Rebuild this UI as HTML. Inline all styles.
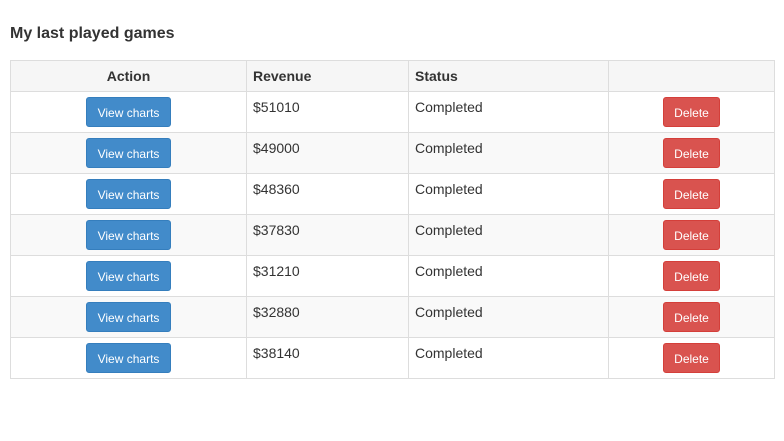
<!DOCTYPE html><html><head><style>
body{margin:0;background:#fff;font-family:"Liberation Sans",sans-serif;color:#333;width:784px;height:441px;overflow:hidden}
h3{position:absolute;left:10px;top:25px;margin:0;font-size:16px;font-weight:bold;color:#333}
table{position:absolute;left:10px;top:60px;border-collapse:collapse;width:765px;font-size:14px}
td,th{border:1px solid #ddd;padding:0 6px;vertical-align:top}
th{height:30px;text-align:left;vertical-align:middle;background:#f6f6f6}
td{height:41px;padding-top:7px;box-sizing:border-box}
tr:nth-child(odd) td{background:#f9f9f9}
.c{text-align:center}
td.c{padding-top:5px}
.b{display:inline-block;color:#fff;font-size:12px;height:30px;line-height:30px;border-radius:3px;box-sizing:border-box}
.v{background:#428bca;border:1px solid #357ebd;width:85px}
.d{background:#d9534f;border:1px solid #d43f3a;width:57px}
</style></head><body>
<h3>My last played games</h3>
<table>
<tr><th class="c" style="width:223px">Action</th><th style="width:149px">Revenue</th><th style="width:187px">Status</th><th></th></tr>
<tr><td class="c"><span class="b v">View charts</span></td><td>$51010</td><td>Completed</td><td class="c"><span class="b d">Delete</span></td></tr>
<tr><td class="c"><span class="b v">View charts</span></td><td>$49000</td><td>Completed</td><td class="c"><span class="b d">Delete</span></td></tr>
<tr><td class="c"><span class="b v">View charts</span></td><td>$48360</td><td>Completed</td><td class="c"><span class="b d">Delete</span></td></tr>
<tr><td class="c"><span class="b v">View charts</span></td><td>$37830</td><td>Completed</td><td class="c"><span class="b d">Delete</span></td></tr>
<tr><td class="c"><span class="b v">View charts</span></td><td>$31210</td><td>Completed</td><td class="c"><span class="b d">Delete</span></td></tr>
<tr><td class="c"><span class="b v">View charts</span></td><td>$32880</td><td>Completed</td><td class="c"><span class="b d">Delete</span></td></tr>
<tr><td class="c"><span class="b v">View charts</span></td><td>$38140</td><td>Completed</td><td class="c"><span class="b d">Delete</span></td></tr>
</table>
</body></html>
